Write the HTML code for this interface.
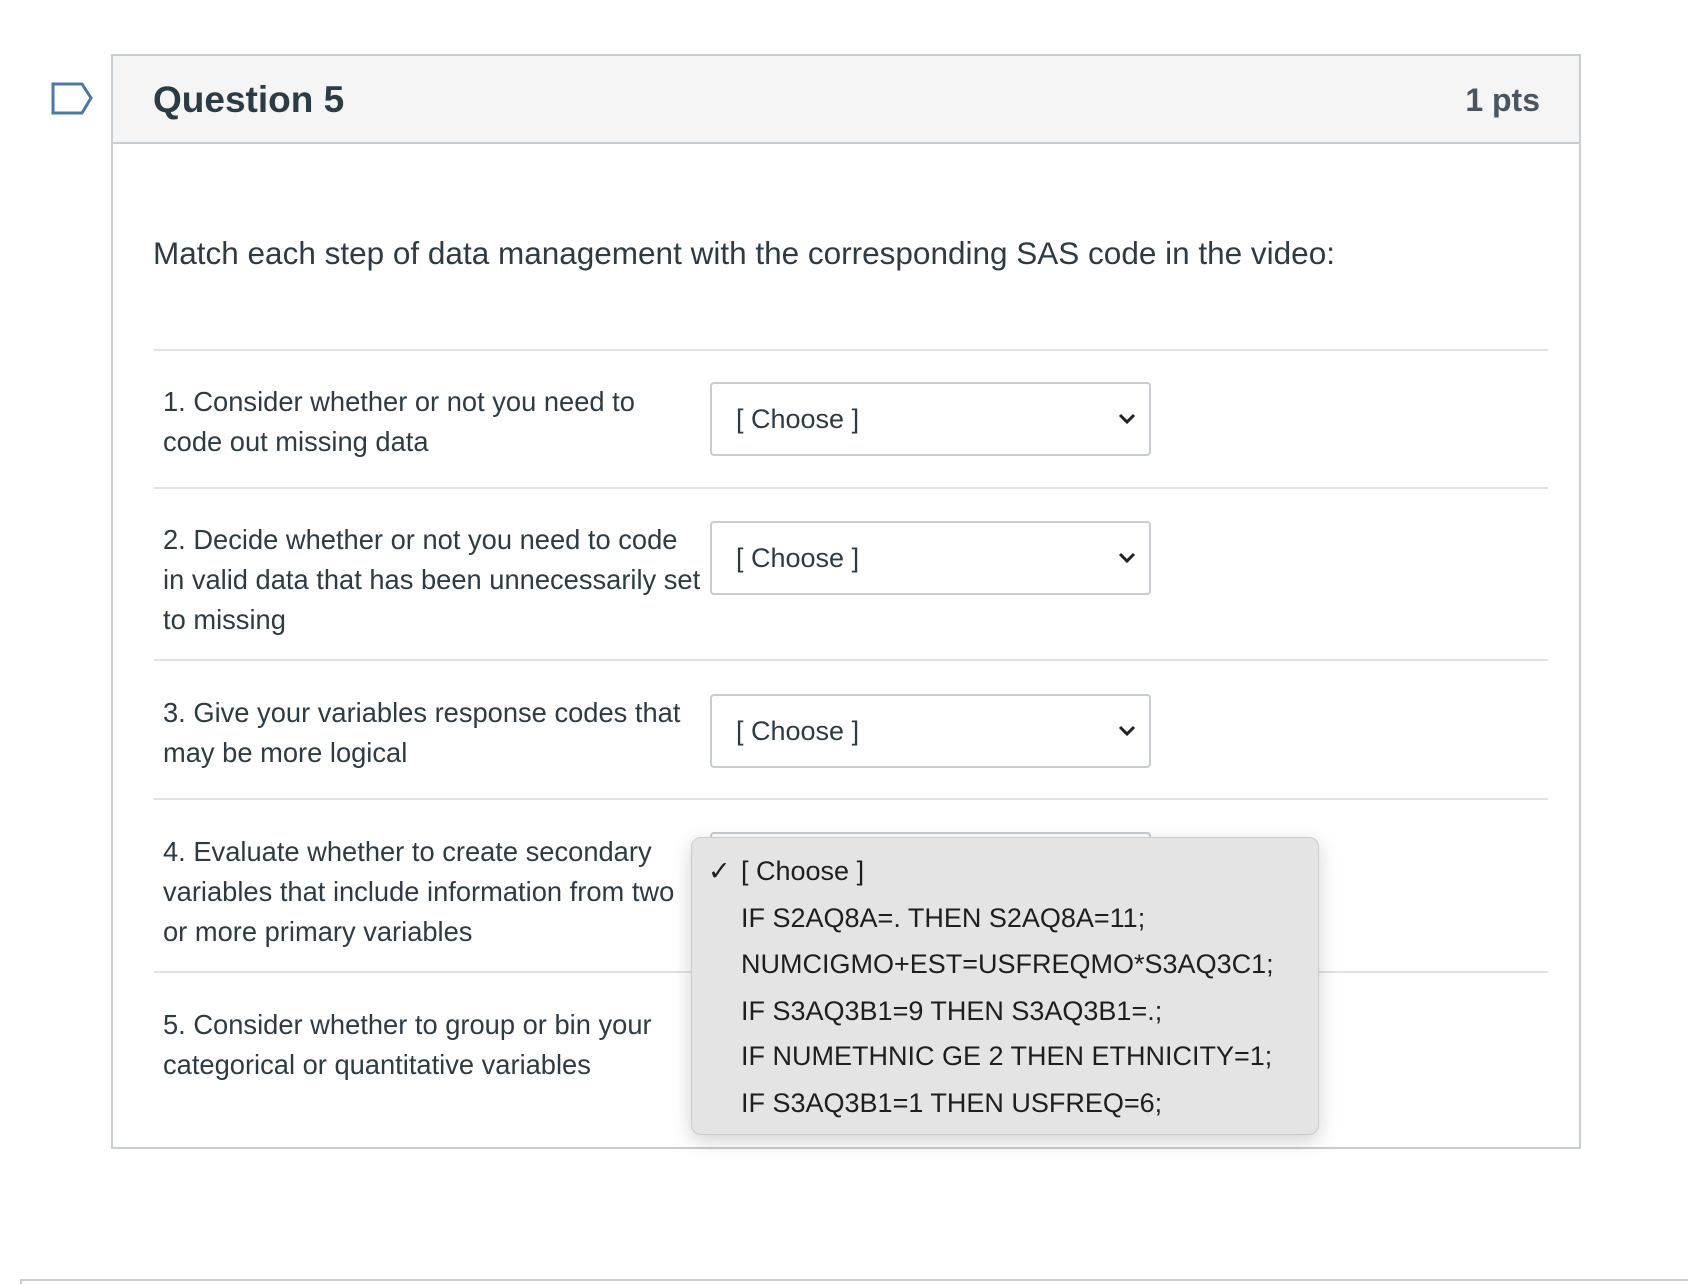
<!DOCTYPE html>
<html><head><style>
body{margin:0;width:1688px;height:1282px;background:#fff;position:relative;overflow:hidden;font-family:"Liberation Sans",sans-serif;color:#2d3b45}
.abs{position:absolute}
.box{left:111px;top:54px;width:1470px;height:1095px;border:2px solid #c7cdd1;box-sizing:border-box}
.hdr{left:113px;top:56px;width:1466px;height:88px;background:#f5f5f5;border-bottom:2px solid #c7cdd1;box-sizing:border-box}
.sep{left:154px;width:1394px;height:2px;background:#dfe3e6}
.rt{left:163px;font-size:27.3px;line-height:40px;width:560px}
.sel{left:710px;width:441px;height:74px;border:2px solid #c7cdd1;border-radius:4px;box-sizing:border-box;background:#fff}
.sel span{position:absolute;left:24px;top:20px;font-size:27px}
.sel svg{position:absolute;right:12px;top:28px}
.dd{top:837px;width:628px;height:298px;background:#e4e4e4;border:1px solid #ccc;border-radius:10px;box-shadow:0 6px 20px rgba(0,0,0,.18);box-sizing:border-box}
.it{left:741px;font-size:27px;color:#1e1e1e;line-height:30px}
</style></head><body>
<svg class="abs" style="left:50px;top:81px" width="44" height="35"><path d="M3 3 H32 L41 17 L32 32 H3 Z" fill="none" stroke="#4a79a8" stroke-width="3"/></svg>
<div class="abs box"></div>
<div class="abs hdr"></div>
<div class="abs" style="left:153px;top:79px;font-size:37px;font-weight:bold">Question 5</div>
<div class="abs" style="right:148px;top:82px;font-size:32px;font-weight:bold;color:#4a5560">1 pts</div>
<div class="abs" style="left:153px;top:235px;font-size:31.5px">Match each step of data management with the corresponding SAS code in the video:</div>
<div class="abs sep" style="top:349px"></div>
<div class="abs sep" style="top:487px"></div>
<div class="abs sep" style="top:659px"></div>
<div class="abs sep" style="top:798px"></div>
<div class="abs sep" style="top:971px"></div>
<div class="abs rt" style="top:382px">1. Consider whether or not you need to<br>code out missing data</div>
<div class="abs rt" style="top:520px">2. Decide whether or not you need to code<br>in valid data that has been unnecessarily set<br>to missing</div>
<div class="abs rt" style="top:693px">3. Give your variables response codes that<br>may be more logical</div>
<div class="abs rt" style="top:832px">4. Evaluate whether to create secondary<br>variables that include information from two<br>or more primary variables</div>
<div class="abs rt" style="top:1005px">5. Consider whether to group or bin your<br>categorical or quantitative variables</div>
<div class="abs sel" style="top:382px"><span>[ Choose ]</span><svg width="20" height="14"><path d="M3 3 L10 10 L17 3" fill="none" stroke="#222" stroke-width="3"/></svg></div>
<div class="abs sel" style="top:521px"><span>[ Choose ]</span><svg width="20" height="14"><path d="M3 3 L10 10 L17 3" fill="none" stroke="#222" stroke-width="3"/></svg></div>
<div class="abs sel" style="top:694px"><span>[ Choose ]</span><svg width="20" height="14"><path d="M3 3 L10 10 L17 3" fill="none" stroke="#222" stroke-width="3"/></svg></div>
<div class="abs sel" style="top:832px;height:20px"></div>
<div class="abs dd" style="left:691px"></div>
<div class="abs it" style="left:708px;top:856px">✓</div>
<div class="abs it" style="top:856px">[ Choose ]</div>
<div class="abs it" style="top:903px">IF S2AQ8A=. THEN S2AQ8A=11;</div>
<div class="abs it" style="top:949px">NUMCIGMO+EST=USFREQMO*S3AQ3C1;</div>
<div class="abs it" style="top:996px">IF S3AQ3B1=9 THEN S3AQ3B1=.;</div>
<div class="abs it" style="top:1041px">IF NUMETHNIC GE 2 THEN ETHNICITY=1;</div>
<div class="abs it" style="top:1088px">IF S3AQ3B1=1 THEN USFREQ=6;</div>
<div class="abs" style="left:20px;top:1279px;width:1680px;height:3px;border-top:2px solid #c7cdd1;border-left:2px solid #c7cdd1"></div>
</body></html>
